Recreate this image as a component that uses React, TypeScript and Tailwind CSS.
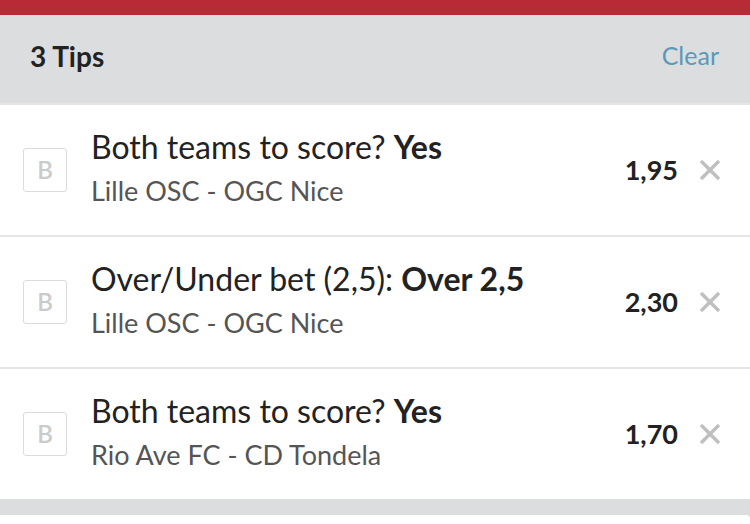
const TIPS = [
  { market: "Both teams to score?", pick: "Yes", match: "Lille OSC - OGC Nice", odds: "1,95" },
  { market: "Over/Under bet (2,5):", pick: "Over 2,5", match: "Lille OSC - OGC Nice", odds: "2,30" },
  { market: "Both teams to score?", pick: "Yes", match: "Rio Ave FC - CD Tondela", odds: "1,70" },
];

function CloseIcon() {
  return (
    <svg width="22" height="22" viewBox="0 0 22 22" className="ml-[21px] shrink-0">
      <path d="M2 2L20 20M20 2L2 20" stroke="#bfbfbf" strokeWidth="3.4" />
    </svg>
  );
}

function TipRow({ market, pick, match, odds }: (typeof TIPS)[number]) {
  return (
    <div className="flex h-[130px] items-center bg-white pl-[23px] pr-[29px]">
      <div className="flex h-[44px] w-[44px] shrink-0 items-center justify-center rounded-[3px] border-[1.5px] border-[#dcdcdc] text-[24px] font-semibold text-[#cbcbcb]">
        B
      </div>
      <div className="mb-[5px] ml-[24px] flex flex-1 flex-col">
        <div className="text-[32px] leading-[38px] text-[#222]">
          {market} <span className="font-bold">{pick}</span>
        </div>
        <div className="mt-[9px] text-[27px] leading-[32px] text-[#555]">{match}</div>
      </div>
      <span className="text-[27px] font-bold text-[#222]">{odds}</span>
      <CloseIcon />
    </div>
  );
}

export default function App() {
  return (
    <div className="h-[524px] w-[750px] overflow-hidden bg-[#dcdddf] font-['Lato',sans-serif]">
      <div className="h-[15px] bg-[#b92a37]" />
      <div className="flex h-[88px] items-center justify-between pb-[6px] pl-[30px] pr-[31px]">
        <span className="text-[28px] font-bold text-[#222]">3 Tips</span>
        <span className="text-[25px] text-[#5a99b7]">Clear</span>
      </div>
      <div className="flex flex-col gap-[2px] bg-[#e6e6e6] pt-[2px]">
        {TIPS.map((t, i) => (
          <TipRow key={i} {...t} />
        ))}
      </div>
      <div className="mt-[16px] h-[20px] rounded-tr-[4px] bg-white" />
    </div>
  );
}
